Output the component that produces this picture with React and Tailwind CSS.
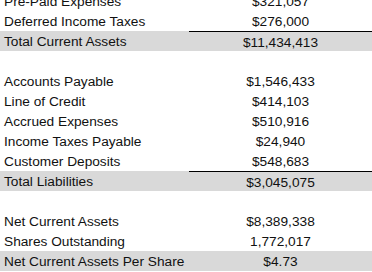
const rows = [
  { label: "Pre-Paid Expenses", value: "$321,057" },
  { label: "Deferred Income Taxes", value: "$276,000" },
  { label: "Total Current Assets", value: "$11,434,413", total: true },
  { label: "", value: "" },
  { label: "Accounts Payable", value: "$1,546,433" },
  { label: "Line of Credit", value: "$414,103" },
  { label: "Accrued Expenses", value: "$510,916" },
  { label: "Income Taxes Payable", value: "$24,940" },
  { label: "Customer Deposits", value: "$548,683" },
  { label: "Total Liabilities", value: "$3,045,075", total: true },
  { label: "", value: "" },
  { label: "Net Current Assets", value: "$8,389,338" },
  { label: "Shares Outstanding", value: "1,772,017" },
  { label: "Net Current Assets Per Share", value: "$4.73", total: true, noLine: true },
];

export default function App() {
  return (
    <div
      className="w-[372px] h-[272px] overflow-hidden bg-white text-[#111] text-[13.7px]"
      style={{ fontFamily: "'Liberation Sans', Arial, sans-serif" }}
    >
      <div className="-mt-[9px]">
        {rows.map((r, i) => (
          <div
            key={i}
            className={
              "grid grid-cols-[189px_1fr] h-[20px] " +
              (r.total ? "bg-[#d9d9d9]" : "")
            }
          >
            <div className="pl-[4px] leading-[22px] whitespace-nowrap overflow-hidden">
              {r.label}
            </div>
            <div
              className={
                "text-center leading-[21px] whitespace-nowrap " +
                (r.total && !r.noLine ? "border-t border-black" : "")
              }
            >
              {r.value}
            </div>
          </div>
        ))}
      </div>
    </div>
  );
}
